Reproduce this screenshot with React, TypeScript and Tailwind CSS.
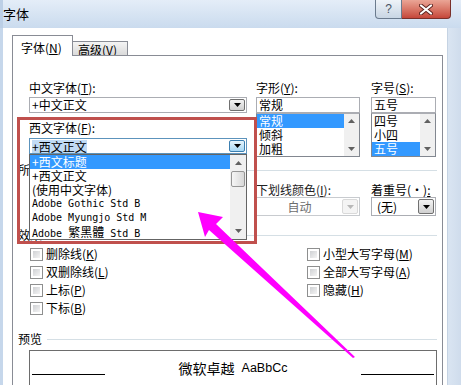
import React from 'react';

const CJK = "font-['Noto_Sans_CJK_SC','Noto_Sans',sans-serif]";
const MONO = "font-['DejaVu_Sans_Mono','Liberation_Mono',monospace] text-[10px]";

const Caret = ({ color = '#000', w = 7, h = 4 }: { color?: string; w?: number; h?: number }) => (
    <svg width={w} height={h} viewBox={`0 0 ${w} ${h}`}>
        <path d={`M0 0H${w}L${w / 2} ${h}Z`} fill={color}/>
    </svg>
);

const UpCaret = ({ color = '#606060' }: { color?: string }) => (
    <svg width="7" height="4" viewBox="0 0 7 4">
        <path d="M0 4H7L3.5 0Z" fill={color}/>
    </svg>
);

const DropBtn = ({ kind = 'normal' }: { kind?: 'normal' | 'hot' | 'disabled' }) => {
    const cls = kind === 'hot'
        ? 'border-[#3c7fb1] bg-linear-to-b from-[#e5f4fc] to-[#a7d8f5]'
        : kind === 'disabled'
            ? 'border-[#d9d9d9] bg-[#f4f4f4]'
            : 'border-[#707070] bg-linear-to-b from-[#f3f3f3] to-[#d0d0d0]';
    return (
        <div className={`w-[16px] my-px mr-px flex items-center justify-center border rounded-[2px] ${cls}`}>
            <Caret color={kind === 'disabled' ? '#b8b8b8' : '#000'}/>
        </div>
    );
};

const Label = ({ children, className = '' }: { children: React.ReactNode; className?: string }) => (
    <div className={`h-[14px] leading-[14px] text-[12px] whitespace-nowrap ${className}`}>{children}</div>
);

const Group = ({ title, className = '' }: { title: string; className?: string }) => (
    <div className={`flex items-center -ml-[11px] h-[14px] ${className}`}>
        <span className="text-[12px] leading-[14px] whitespace-nowrap">{title}</span>
        <div className="flex-1 ml-[5px] h-px bg-[#d5dfe5]"/>
    </div>
);

const MiniScroll = () => (
    <div className="w-[15px] bg-[#f0f0f0] flex flex-col justify-between">
        <div className="h-[14px] flex items-center justify-center"><UpCaret/></div>
        <div className="h-[14px] flex items-center justify-center"><Caret color="#606060"/></div>
    </div>
);

const PickList = ({ items, sel }: { items: string[]; sel: number }) => (
    <div className="h-[44px] border border-[#828790] border-t-[#abadb3] flex bg-white">
        <div className="flex-1">
            {items.map((t, i) => (
                <div key={t} className={`h-[14px] leading-[14px] text-[12px] pl-[2px] ${i === sel ? 'bg-[#3399ff] text-white' : ''}`}>
                    {t}
                </div>
            ))}
        </div>
        <MiniScroll/>
    </div>
);

const Check = ({ label, k }: { label: string; k: string }) => (
    <div className="h-[18px] flex items-center">
        <div className="w-[13px] h-[13px] border border-[#8e8f8f] bg-white p-[2px]">
            <div className="w-full h-full bg-linear-to-br from-[#cfd1d4] to-[#f4f4f4]"/>
        </div>
        <span className="ml-[3px] text-[12px] leading-[14px] whitespace-nowrap">{label}(<u>{k}</u>)</span>
    </div>
);

export default function App() {
    return (
        <div className={`relative w-[461px] h-[385px] overflow-hidden bg-white text-black ${CJK}`}>

            {/* title bar */}
            <div className="h-[28px] flex justify-between bg-linear-to-b from-[#e4edf8] to-[#cadbee] border-l-[3px] border-[#bccfe6]">
                <div className="pt-[6px] text-[13px] leading-[15px]">字体</div>
                <div className="flex mr-[10px] h-[19px]">
                    <div className="w-[27px] border border-t-0 border-[#6b7b8e] rounded-bl-[4px] bg-linear-to-b from-[#eef3f8] to-[#c9d6e4] flex items-center justify-center text-[12px] leading-[12px] text-[#4a5563] font-['Liberation_Sans',sans-serif]">?</div>
                    <div className="w-[49px] border border-t-0 border-l-0 border-[#7a302a] rounded-br-[4px] bg-linear-to-b from-[#eaa596] to-[#c5463a] flex items-center justify-center">
                        <svg width="14" height="11" viewBox="0 0 14 11">
                            <path d="M2 1.5L12 9.5M12 1.5L2 9.5" stroke="#5c231e" strokeWidth="4" strokeLinecap="round"/>
                            <path d="M2 1.5L12 9.5M12 1.5L2 9.5" stroke="#fff" strokeWidth="2.2" strokeLinecap="round"/>
                        </svg>
                    </div>
                </div>
            </div>

            <div className="flex h-[357px]">
                <div className="w-[3px] bg-[#c6d7eb]"/>

                <div className="flex-1 pl-[9px] pt-[7px] flex flex-col">
                    {/* tabs */}
                    <div className="flex items-end h-[20px]">
                        <div className="relative z-10 -mb-px h-[21px] w-[61px] border border-b-0 border-[#898c95] bg-white pl-[8px] pt-[5px] text-[12px] leading-[13px]">
                            字体(<u>N</u>)
                        </div>
                        <div className="h-[14px] w-[55px] border border-l-0 border-b-0 border-[#898c95] bg-linear-to-b from-[#f4f4f4] to-[#dadada] pl-[5px] pt-[1px] text-[12px] leading-[13px]">
                            高级(<u>V</u>)
                        </div>
                    </div>

                    {/* pane */}
                    <div className="w-[431px] h-[360px] shrink-0 border border-[#898c95] bg-white pl-[16px] pr-[5px] pt-[25px]">

                        {/* fonts row */}
                        <div className="flex">
                            <div className="w-[218px]">
                                <Label>中文字体(<u>T</u>):</Label>
                                <div className="mt-[2px] h-[16px] border border-[#abadb3] flex">
                                    <div className="flex-1 pl-[2px] text-[12px] leading-[14px]">+中文正文</div>
                                    <DropBtn/>
                                </div>
                                <Label className="mt-[8px]">西文字体(<u>F</u>):</Label>
                                <div className="relative mt-[3px]">
                                    <div className="h-[16px] border border-[#5c93bc] flex">
                                        <div className="flex-1 pl-[2px] flex items-center">
                                            <span className="inline-block h-[13px] text-[12px] leading-[13px] bg-[#c1dbf5]">+西文正文</span>
                                        </div>
                                        <DropBtn kind="hot"/>
                                    </div>
                                    {/* open dropdown */}
                                    <div className="absolute left-0 right-0 top-full z-20 h-[86px] border border-[#646464] bg-white flex">
                                        <div className="flex-1 text-[12px]">
                                            <div className="h-[14px] leading-[14px] pl-[2px] bg-[#3399ff] text-white">+西文标题</div>
                                            <div className="h-[14px] leading-[14px] pl-[2px]">+西文正文</div>
                                            <div className="h-[14px] leading-[14px] pl-[2px]">(使用中文字体)</div>
                                            <div className={`h-[14px] leading-[14px] pl-[2px] ${MONO}`}>Adobe Gothic Std B</div>
                                            <div className={`h-[14px] leading-[14px] pl-[2px] ${MONO}`}>Adobe Myungjo Std M</div>
                                            <div className={`h-[14px] leading-[14px] pl-[2px] ${MONO}`}>
                                                Adobe <span className={`${CJK} text-[12px]`}>繁黑體</span> Std B
                                            </div>
                                        </div>
                                        <div className="w-[16px] bg-[#f0f0f0] flex flex-col">
                                            <div className="h-[16px] flex items-center justify-center"><UpCaret/></div>
                                            <div className="h-[16px] mx-px border border-[#959595] rounded-[2px] bg-linear-to-r from-[#f5f5f5] to-[#d8d8d8]"/>
                                            <div className="flex-1"/>
                                            <div className="h-[16px] flex items-center justify-center"><Caret color="#606060"/></div>
                                        </div>
                                    </div>
                                </div>
                            </div>

                            <div className="ml-[9px] w-[104px]">
                                <Label>字形(<u>Y</u>):</Label>
                                <div className="mt-[2px] h-[16px] border border-[#abadb3] pl-[2px] text-[12px] leading-[14px]">常规</div>
                                <PickList items={['常规', '倾斜', '加粗']} sel={0}/>
                            </div>

                            <div className="ml-[11px] w-[65px]">
                                <Label>字号(<u>S</u>):</Label>
                                <div className="mt-[2px] h-[16px] border border-[#abadb3] pl-[2px] text-[12px] leading-[14px]">五号</div>
                                <PickList items={['四号', '小四', '五号']} sel={2}/>
                            </div>
                        </div>

                        <Group title="所有文字" className="mt-[6px]"/>

                        {/* colour / underline row; first column sits under the open list */}
                        <div className="flex mt-[6px]">
                            <div className="w-[218px]"/>
                            <div className="ml-[9px] w-[104px]">
                                <Label className="text-[#222]">下划线颜色(<u>I</u>):</Label>
                                <div className="h-[19px] border border-[#c8cbcf] flex">
                                    <div className="flex-1 text-center text-[12px] leading-[17px] text-[#6d6d6d]">自动</div>
                                    <DropBtn kind="disabled"/>
                                </div>
                            </div>
                            <div className="ml-[11px] w-[65px]">
                                <Label>着重号(·)<u>:</u></Label>
                                <div className="h-[19px] border border-[#abadb3] flex">
                                    <div className="flex-1 pl-[5px] text-[12px] leading-[17px]">(无)</div>
                                    <DropBtn/>
                                </div>
                            </div>
                        </div>

                        <Group title="效果" className="mt-[12px]"/>

                        <div className="flex mt-[3px] pl-px">
                            <div className="w-[277px]">
                                <Check label="删除线" k="K"/>
                                <Check label="双删除线" k="L"/>
                                <Check label="上标" k="P"/>
                                <Check label="下标" k="B"/>
                            </div>
                            <div>
                                <Check label="小型大写字母" k="M"/>
                                <Check label="全部大写字母" k="A"/>
                                <Check label="隐藏" k="H"/>
                            </div>
                        </div>

                        <Group title="预览" className="mt-[15px]"/>

                        <div className="mt-[4px] h-[60px] border border-[#6d6d6d] bg-white">
                            <div className="h-[25px] flex items-end px-[2px]">
                                <div className="w-[73px] h-px bg-black mb-[1px]"/>
                                <div className="flex-1 flex items-end justify-center">
                                    <span className="text-[14px] leading-[15px]">微软卓越</span>
                                    <span className="ml-[7px] text-[12.5px] leading-[15px] font-['Liberation_Sans',sans-serif]">AaBbCc</span>
                                </div>
                                <div className="w-[73px] h-px bg-black mb-[1px]"/>
                            </div>
                        </div>
                    </div>
                </div>

                <div className="w-[14px] bg-linear-to-r from-[#dae5f2] to-[#cfdcec] border-l border-[#c5d3e3]"/>
            </div>

            {/* annotation: red box */}
            <div className="absolute left-[17px] top-[117px] w-[240px] h-[127px] border-[3px] border-[#c0504d] z-30 pointer-events-none"/>

            {/* annotation: arrow */}
            <svg className="absolute left-0 top-0 z-40 pointer-events-none" width="461" height="385" viewBox="0 0 461 385">
                <polygon points="198,212 223,217 216,224 355,357 353,358 209,230 205,237" fill="#ff00ff"/>
            </svg>
        </div>
    );
}
